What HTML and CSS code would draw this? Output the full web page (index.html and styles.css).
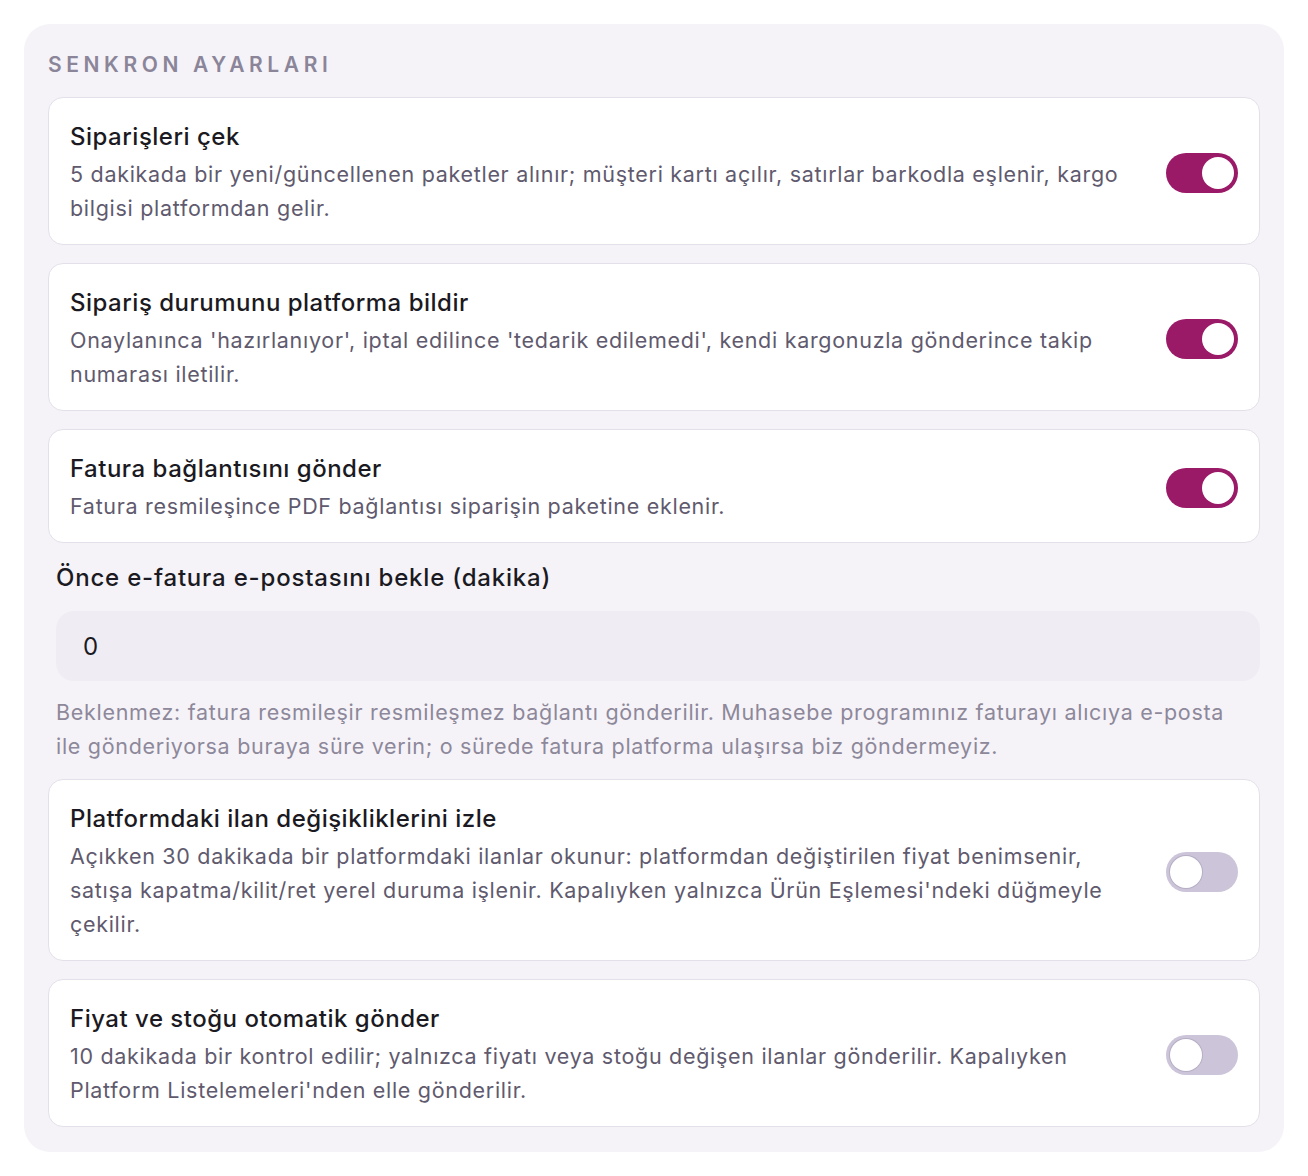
FILE: index.html
```html
<!DOCTYPE html>
<html lang="tr">
<head>
    <meta charset="UTF-8">
    <meta name="viewport" content="width=device-width, initial-scale=1.0">
    <title>Senkron Ayarları</title>
    <link rel="stylesheet" href="styles.css">
</head>
<body>
    <section class="panel">
        <h2 class="panel-title">SENKRON AYARLARI</h2>

        <div class="setting">
            <div class="setting-text">
                <div class="setting-name">Siparişleri çek</div>
                <div class="setting-desc">5 dakikada bir yeni/güncellenen paketler alınır; müşteri kartı açılır, satırlar barkodla eşlenir, kargo bilgisi platformdan gelir.</div>
            </div>
            <label class="toggle"><input type="checkbox" checked><span class="track"></span></label>
        </div>

        <div class="setting">
            <div class="setting-text">
                <div class="setting-name">Sipariş durumunu platforma bildir</div>
                <div class="setting-desc">Onaylanınca 'hazırlanıyor', iptal edilince 'tedarik edilemedi', kendi kargonuzla gönderince takip numarası iletilir.</div>
            </div>
            <label class="toggle"><input type="checkbox" checked><span class="track"></span></label>
        </div>

        <div class="setting">
            <div class="setting-text">
                <div class="setting-name">Fatura bağlantısını gönder</div>
                <div class="setting-desc">Fatura resmileşince PDF bağlantısı siparişin paketine eklenir.</div>
            </div>
            <label class="toggle"><input type="checkbox" checked><span class="track"></span></label>
        </div>

        <div class="field">
            <label class="field-label" for="bekle">Önce e-fatura e-postasını bekle (dakika)</label>
            <input id="bekle" class="field-input" type="text" value="0">
            <p class="field-help">Beklenmez: fatura resmileşir resmileşmez bağlantı gönderilir. Muhasebe programınız faturayı alıcıya e-posta ile gönderiyorsa buraya süre verin; o sürede fatura platforma ulaşırsa biz göndermeyiz.</p>
        </div>

        <div class="setting">
            <div class="setting-text">
                <div class="setting-name">Platformdaki ilan değişikliklerini izle</div>
                <div class="setting-desc">Açıkken 30 dakikada bir platformdaki ilanlar okunur: platformdan değiştirilen fiyat benimsenir, satışa kapatma/kilit/ret yerel duruma işlenir. Kapalıyken yalnızca Ürün Eşlemesi'ndeki düğmeyle çekilir.</div>
            </div>
            <label class="toggle"><input type="checkbox"><span class="track"></span></label>
        </div>

        <div class="setting">
            <div class="setting-text">
                <div class="setting-name">Fiyat ve stoğu otomatik gönder</div>
                <div class="setting-desc">10 dakikada bir kontrol edilir; yalnızca fiyatı veya stoğu değişen ilanlar gönderilir. Kapalıyken Platform Listelemeleri'nden elle gönderilir.</div>
            </div>
            <label class="toggle"><input type="checkbox"><span class="track"></span></label>
        </div>
    </section>
</body>
</html>
```

FILE: styles.css
```css
/* Genel */
body {
    margin: 0;
    padding: 24px;
    background: #ffffff;
    font-family: 'Inter', 'Noto Sans', sans-serif;
    color: #1b1a22;
}

.panel {
    background: #f5f3f8;
    border-radius: 26px;
    padding: 24px 24px 25px 24px;
    display: flex;
    flex-direction: column;
    gap: 18px;
}

.panel-title {
    margin: 2px 0 -1px;
    font-size: 21px;
    font-weight: 600;
    letter-spacing: 4.6px;
    color: #8b8599;
    line-height: 30px;
}

/* Satır kartları */
.setting {
    display: flex;
    align-items: center;
    gap: 40px;
    background: #ffffff;
    border: 1px solid #e3e0e9;
    border-radius: 15px;
    padding: 22px 21px 19px 21px;
}

.setting-text {
    flex: 1;
}

.setting-name {
    font-size: 24px;
    font-weight: 450;
    line-height: 34px;
    margin-bottom: 3px;
    letter-spacing: 0.5px;
}

.setting-desc {
    font-size: 21.5px;
    line-height: 34px;
    color: #5f5a6e;
    letter-spacing: 0.7px;
}

/* Anahtar */
.toggle {
    flex: none;
    width: 72px;
    height: 40px;
    position: relative;
    cursor: pointer;
}

.toggle input {
    display: none;
}

.track {
    display: block;
    width: 100%;
    height: 100%;
    border-radius: 20px;
    background: #ccc4d8;
    transition: background-color 0.2s ease;
}

.track::after {
    content: "";
    position: absolute;
    top: 4px;
    left: 4px;
    width: 32px;
    height: 32px;
    border-radius: 50%;
    background: #ffffff;
    box-shadow: 0 0 0 1px rgba(120, 110, 140, 0.25);
    transition: left 0.2s ease;
}

.toggle input:checked + .track {
    background: #9a1a68;
}

.toggle input:checked + .track::after {
    left: 36px;
    box-shadow: none;
}

/* Bekleme alanı */
.field {
    display: flex;
    flex-direction: column;
    padding: 0 0 0 8px;
    margin: 0 0 -2px;
}

.field-label {
    font-size: 24px;
    font-weight: 500;
    line-height: 34px;
    letter-spacing: 0.8px;
    margin-bottom: 16px;
}

.field-input {
    height: 70px;
    border: none;
    border-radius: 18px;
    background: #efedf3;
    padding: 0 27px;
    font-family: inherit;
    font-size: 24px;
    color: #1b1a22;
    outline: none;
}

.field-help {
    margin: 14px 0 0;
    padding-right: 24px;
    font-size: 21.5px;
    line-height: 34px;
    color: #8d889a;
    letter-spacing: 0.7px;
}
```
